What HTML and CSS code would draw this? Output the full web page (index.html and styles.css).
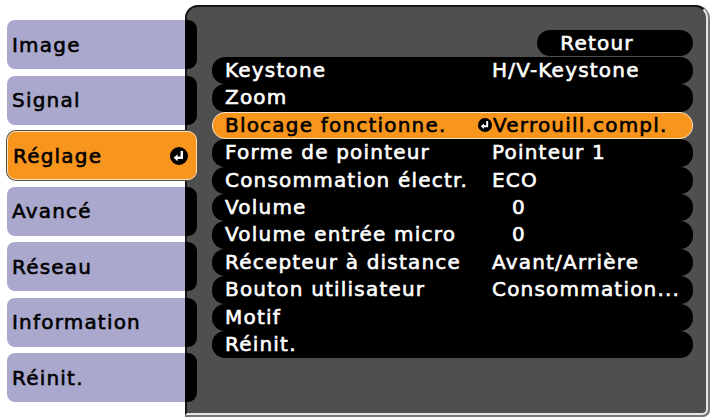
FILE: index.html
```html
<!DOCTYPE html>
<html>
<head>
    <title>Réglage</title>
    <link rel="stylesheet" href="styles.css">
</head>
<body>
    <div class="screen">
      <div class="tabs">
        <div class="tab"><span class="tab-label">Image</span><span class="tab-cap"></span></div>
        <div class="tab"><span class="tab-label">Signal</span><span class="tab-cap"></span></div>
        <div class="tab tab-active">
          <span class="tab-label">Réglage</span>
          <svg class="enter" viewBox="0 0 16 16"><circle cx="8" cy="8" r="8" fill="#000"/><path d="M10.5 3.5 V9.5 H6" stroke="#fff" stroke-width="2.2" fill="none"/><polygon points="3.2,9.5 6.8,6.4 6.8,12.6" fill="#fff"/></svg>
        </div>
        <div class="tab"><span class="tab-label">Avancé</span><span class="tab-cap"></span></div>
        <div class="tab"><span class="tab-label">Réseau</span><span class="tab-cap"></span></div>
        <div class="tab"><span class="tab-label">Information</span><span class="tab-cap"></span></div>
        <div class="tab"><span class="tab-label">Réinit.</span><span class="tab-cap"></span></div>
      </div>

      <div class="panel">
        <div class="back-row"><div class="back">Retour</div></div>
        <div class="rows">
          <div class="row"><span class="label">Keystone</span><span class="value">H/V-Keystone</span></div>
          <div class="row"><span class="label">Zoom</span><span class="value"></span></div>
          <div class="row row-active">
            <span class="label">Blocage fonctionne.</span>
            <span class="value value-icon"><svg class="enter small" viewBox="0 0 16 16"><circle cx="8" cy="8" r="8" fill="#000"/><path d="M10.5 3.5 V9.5 H6" stroke="#fff" stroke-width="2.2" fill="none"/><polygon points="3.2,9.5 6.8,6.4 6.8,12.6" fill="#fff"/></svg>Verrouill.compl.</span>
          </div>
          <div class="row"><span class="label">Forme de pointeur</span><span class="value">Pointeur 1</span></div>
          <div class="row"><span class="label">Consommation électr.</span><span class="value">ECO</span></div>
          <div class="row"><span class="label">Volume</span><span class="value num">0</span></div>
          <div class="row"><span class="label">Volume entrée micro</span><span class="value num">0</span></div>
          <div class="row"><span class="label">Récepteur à distance</span><span class="value">Avant/Arrière</span></div>
          <div class="row"><span class="label">Bouton utilisateur</span><span class="value">Consommation...</span></div>
          <div class="row"><span class="label">Motif</span><span class="value"></span></div>
          <div class="row"><span class="label">Réinit.</span><span class="value"></span></div>
        </div>
      </div>
    </div>
</body>
</html>
```

FILE: styles.css
```css
body {
    margin: 0;
    background: #fff;
    font-family: "DejaVu Sans", sans-serif;
    font-size: 20px;
    letter-spacing: 1.2px;
    -webkit-text-stroke: 0.6px;
}

.screen {
    display: flex;
    width: 712px;
    height: 420px;
}

.tabs {
    position: relative;
    z-index: 1;
    width: 190px;
    padding: 20px 0 0 7px;
    display: flex;
    flex-direction: column;
    gap: 6.5px;
    flex-shrink: 0;
}

.tab {
    display: flex;
    height: 49px;
    color: #000;
}

.tab-label {
    flex: 1;
    display: flex;
    align-items: center;
    padding-left: 5px;
    background: #aaa9cd;
    border-radius: 8px 0 0 8px;
}

.tab-cap {
    width: 12px;
    background: #000;
    border-radius: 0 9px 9px 0;
}

.tab-active {
    background: #f8951d;
    border: 1px solid #f4e2c6;
    border-radius: 9px;
    box-shadow: 0 0 0 1px #5a4a36;
    align-items: center;
    height: 47px;
}

.tab-active .tab-label {
    background: none;
}

.enter {
    width: 18px;
    height: 18px;
    margin-right: 8px;
}

.enter.small {
    width: 14px;
    height: 14px;
    margin: 0 1px 0 0;
}

.panel {
    box-sizing: border-box;
    margin: 5px 4px 0 -12px;
    height: 410px;
    flex: 1;
    background: #4f4f4f;
    border: 2px solid #151515;
    border-right-color: #e6e6e6;
    border-bottom-color: #e6e6e6;
    border-radius: 13px 13px 6px 0;
    box-shadow: 1px 1px 0 1px #777;
    padding: 23px 13px 0 25px;
}

.back-row {
    display: flex;
    justify-content: flex-end;
}

.back {
    width: 156px;
    height: 26px;
    line-height: 26px;
    background: #000;
    color: #fff;
    border-radius: 13px;
    text-align: center;
    padding-right: 36px;
    box-sizing: border-box;
}

.rows {
    margin-top: 1px;
}

.row {
    display: flex;
    height: 27.4px;
    line-height: 27px;
    background: #000;
    color: #fff;
    border-radius: 13px;
}

.row-active {
    background: #f8951d;
    color: #000;
    border: 1px solid #f4e2c6;
    height: 25.4px;
    line-height: 25px;
}

.label {
    width: 267px;
    padding-left: 13px;
    white-space: nowrap;
}

.row-active .label {
    padding-left: 12px;
}

.value {
    white-space: nowrap;
}

.value-icon {
    display: flex;
    align-items: center;
    margin-left: -14px;
}

.num {
    padding-left: 20px;
}
```
